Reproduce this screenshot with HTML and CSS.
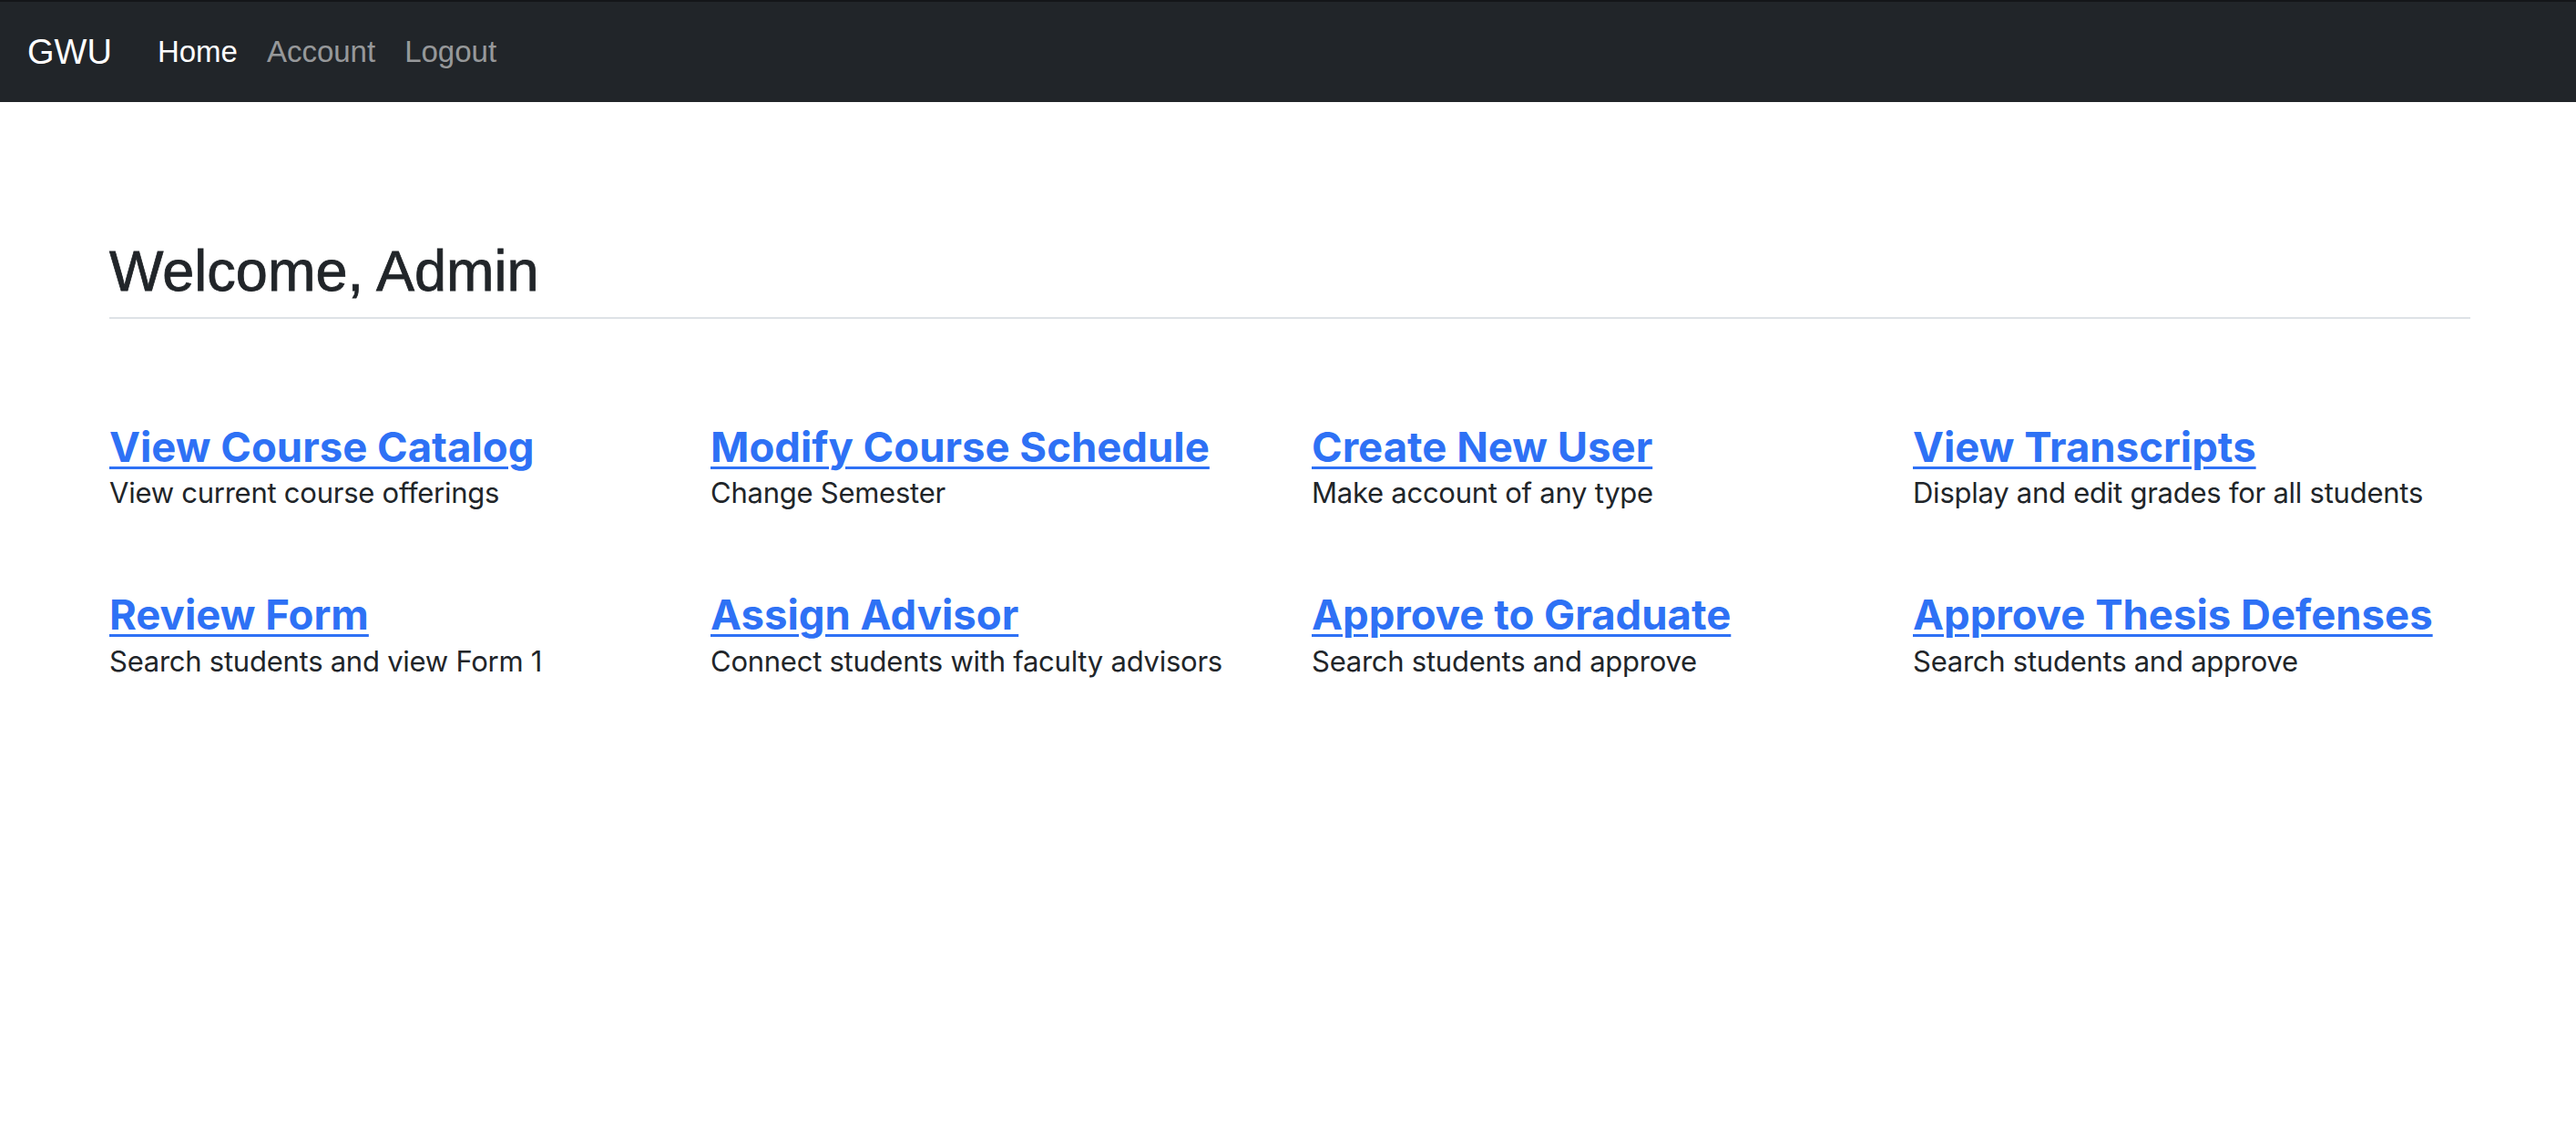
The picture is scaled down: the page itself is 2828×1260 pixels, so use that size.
FILE: index.html
```html
<!DOCTYPE html>
<html lang="en">
<head>
<meta charset="utf-8">
<title>GWU - Home</title>
<link rel="stylesheet" href="styles.css">
</head>
<body>
<nav class="navbar">
  <a class="brand" href="#">GWU</a>
  <ul class="nav">
    <li><a class="nav-link active" href="#">Home</a></li>
    <li><a class="nav-link" href="#">Account</a></li>
    <li><a class="nav-link" href="#">Logout</a></li>
  </ul>
</nav>
<main class="main">
  <h2 class="welcome">Welcome, Admin</h2>
  <div class="grid">
    <div class="item"><a class="item-title" href="#">View Course Catalog</a><p class="item-desc">View current course offerings</p></div>
    <div class="item"><a class="item-title" href="#">Modify Course Schedule</a><p class="item-desc">Change Semester</p></div>
    <div class="item"><a class="item-title" href="#">Create New User</a><p class="item-desc">Make account of any type</p></div>
    <div class="item"><a class="item-title" href="#">View Transcripts</a><p class="item-desc">Display and edit grades for all students</p></div>
    <div class="item"><a class="item-title" href="#">Review Form</a><p class="item-desc">Search students and view Form 1</p></div>
    <div class="item"><a class="item-title" href="#">Assign Advisor</a><p class="item-desc">Connect students with faculty advisors</p></div>
    <div class="item"><a class="item-title" href="#">Approve to Graduate</a><p class="item-desc">Search students and approve</p></div>
    <div class="item"><a class="item-title" href="#">Approve Thesis Defenses</a><p class="item-desc">Search students and approve</p></div>
  </div>
</main>
</body>
</html>
```
FILE: styles.css
```css
* { box-sizing: border-box; }
html, body { margin: 0; padding: 0; background: #fff; }
body {
  font-family: Inter, "Noto Sans", sans-serif;
  color: #212529;
  font-size: 32px;
}
.navbar {
  height: 112px;
  background: #212529;
  border-top: 2px solid #141619;
  display: flex;
  align-items: center;
  padding: 0 30px;
  font-family: "Liberation Sans", Arial, sans-serif;
}
.brand {
  color: #fff;
  text-decoration: none;
  font-size: 38px;
  margin-right: 34px;
}
.nav {
  list-style: none;
  margin: 0;
  padding: 0;
  display: flex;
}
.nav-link {
  display: block;
  padding: 0 16px;
  font-size: 33px;
  color: rgba(255, 255, 255, 0.55);
  text-decoration: none;
}
.nav-link.active { color: #fff; }
.main {
  padding: 0 116px 0 120px;
}
.welcome {
  font-family: "Liberation Sans", Arial, sans-serif;
  font-weight: 400;
  font-size: 63px;
  line-height: 1.2;
  margin: 148px 0 0;
  padding-bottom: 12px;
  border-bottom: 2px solid #dee2e6;
  -webkit-text-stroke: 0.8px #212529;
}
.grid {
  display: grid;
  grid-template-columns: repeat(4, 1fr);
  column-gap: 48px;
  row-gap: 83px;
  margin-top: 114px;
}
.item { display: flex; flex-direction: column; align-items: flex-start; }
.item-title {
  font-size: 45.5px;
  font-weight: 700;
  line-height: 1.2;
  color: #2e71f5;
  text-decoration: underline;
  text-decoration-thickness: 3px;
  text-underline-offset: 5px;
}
.item-desc {
  margin: -1px 0 0;
  font-size: 31px;
  letter-spacing: -0.25px;
  line-height: 48px;
}
```
